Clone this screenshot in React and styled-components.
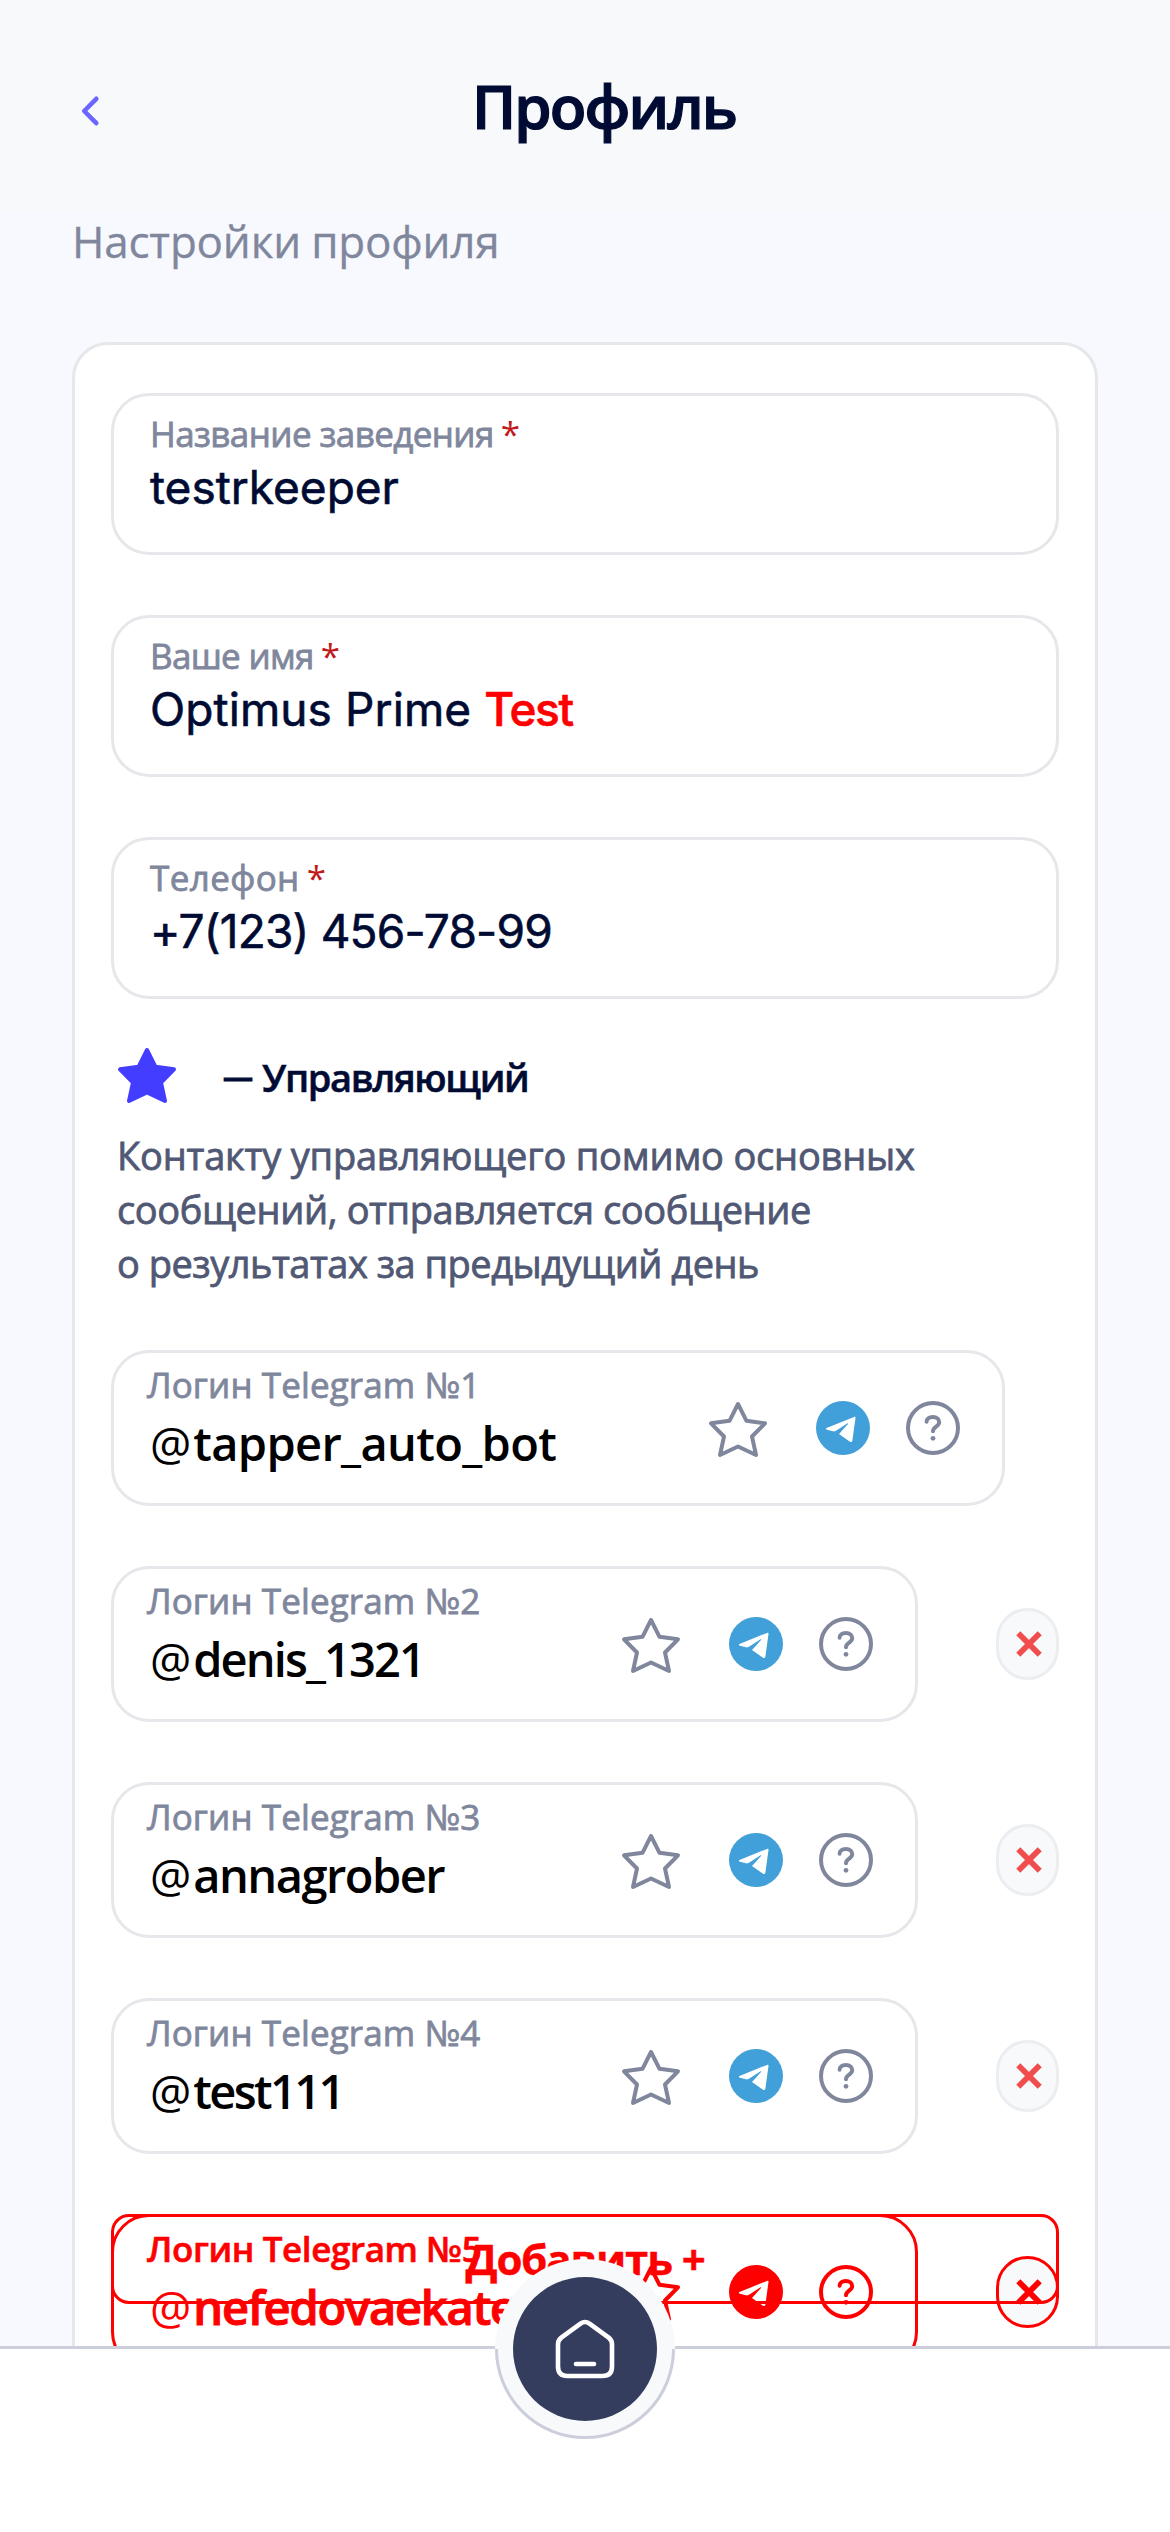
import React from 'react';
import styled, { createGlobalStyle } from 'styled-components';

const RED = '#ff0000';

const GlobalStyle = createGlobalStyle`
  *, *::before, *::after { box-sizing: border-box; }
  body {
    margin: 0;
    background: #f8f9fe;
    font-family: "Open Sans", "Noto Sans", sans-serif;
    color: #000b33;
  }
  svg { display: block; flex: none; overflow: visible; }
`;

const Page = styled.div`
  display: flex;
  flex-direction: column;
  width: 1170px;
  height: 2532px;
  overflow: hidden;
  background: #f8f9fe;
`;

const Header = styled.header`
  display: flex;
  align-items: center;
  flex: none;
  height: 211px;
  padding: 0 72px;
  background: #f7f9fa;
`;

const BackButton = styled.button`
  display: flex;
  width: 38px;
  padding: 10px 0 0 9px;
  border: 0;
  background: none;
`;

const Title = styled.h1`
  flex: 1;
  margin: 0;
  text-align: center;
  font-size: 60px;
  line-height: 80px;
  font-weight: 600;
  letter-spacing: -1.9px;
  -webkit-text-stroke: 1.2px currentColor;
`;

const Content = styled.main`
  flex: 1;
  min-height: 0;
  overflow: hidden;
  padding: 0 72px;
`;

const Subtitle = styled.p`
  margin: 0 0 71px;
  font-size: 44px;
  line-height: 60px;
  letter-spacing: -0.2px;
  word-spacing: -1px;
  -webkit-text-stroke: 0.3px currentColor;
  color: #80879d;
`;

const Card = styled.section`
  display: flex;
  flex-direction: column;
  min-height: 2300px;
  padding: 48px 36px;
  border: 3px solid #e5e7ea;
  border-radius: 36px;
  background: #fff;
`;

const Fields = styled.div`
  display: flex;
  flex-direction: column;
  gap: 60px;
`;

const Field = styled.label`
  display: block;
  height: 162px;
  padding: 15px 36px 0;
  border: 3px solid #e5e7ea;
  border-radius: 38px;
`;

const FieldLabel = styled.div`
  font-size: 35px;
  line-height: 45px;
  letter-spacing: ${(p) => p.$spacing}px;
  -webkit-text-stroke: 0.8px currentColor;
  color: #80879d;
`;

const Required = styled.span`
  margin-left: 7px;
  -webkit-text-stroke: 0;
  color: #c01a1a;
`;

const FieldValue = styled.div`
  font-family: Inter, Roboto, sans-serif;
  font-size: 46px;
  line-height: 62px;
  letter-spacing: ${(p) => p.$spacing}px;
  -webkit-text-stroke: 0.6px currentColor;
  white-space: pre;
`;

const Flagged = styled.span`
  color: ${RED};
  font-weight: 500;
  letter-spacing: -1.3px;
`;

const Legend = styled.div`
  display: flex;
  gap: 45px;
  height: 60px;
  margin: 45px 0 24px 5px;

  svg { margin-top: 2px; }
`;

const LegendText = styled.div`
  font-size: 38px;
  line-height: 66px;
  font-weight: 600;
  letter-spacing: -1.4px;
  word-spacing: 2px;
  -webkit-text-stroke: 0.5px currentColor;
`;

const Dash = styled.span`
  font-size: 30px;
  line-height: 0;
  vertical-align: 4px;
  -webkit-text-stroke: 1.2px currentColor;
`;

const Description = styled.p`
  margin: 0 0 60px 6px;
  font-size: 38px;
  line-height: 54px;
  -webkit-text-stroke: 0.8px currentColor;
  color: #505874;
`;

const Line = styled.span`
  display: block;
  letter-spacing: ${(p) => p.$spacing}px;
`;

const Row = styled.div`
  display: flex;
  align-items: center;
  gap: 78px;
`;

const LoginBox = styled.div`
  display: flex;
  align-items: center;
  width: ${(p) => (p.$wide ? 894 : 807)}px;
  height: 156px;
  padding: 0 42px 0 33px;
  border: 3px solid ${(p) => (p.$alert ? RED : '#e5e7ea')};
  border-radius: 38px;
  color: ${(p) => (p.$alert ? RED : '#000')};
`;

const LoginText = styled.div`
  flex: 1;
  min-width: 0;
  align-self: flex-start;
  padding-top: 11px;
`;

const LoginLabel = styled.div`
  font-size: 35px;
  line-height: 42px;
  font-weight: ${(p) => (p.$alert ? 600 : 400)};
  letter-spacing: ${(p) => (p.$alert ? -0.4 : 0.1)}px;
  -webkit-text-stroke: ${(p) => (p.$alert ? 0.6 : 0.8)}px currentColor;
  color: ${(p) => (p.$alert ? RED : '#80879d')};
`;

const LoginValue = styled.div`
  display: flex;
  align-items: baseline;
  gap: 2px;
  padding: 4px 0 0 3px;
  font-size: 47px;
  line-height: 66px;
  font-weight: 600;
  letter-spacing: ${(p) => p.$spacing}px;
  -webkit-text-stroke: ${(p) => (p.$alert ? 1 : 0)}px currentColor;
`;

const At = styled.span`
  font-size: 46px;
  font-weight: 400;
  letter-spacing: 0;
  -webkit-text-stroke: 0;
`;

const Icons = styled.div`
  display: flex;
  align-items: center;
  gap: 36px;
  color: ${(p) => (p.$alert ? RED : '#80879d')};

  svg:first-child { margin-right: 11px; }
`;

const RemoveButton = styled.button`
  display: flex;
  align-items: center;
  justify-content: center;
  width: 63px;
  height: 72px;
  padding: 0 0 0 3px;
  border: 3px solid ${(p) => (p.$alert ? RED : '#ecedf1')};
  border-radius: 32px;
  background: #f7f9fa;
  color: ${(p) => (p.$alert ? RED : '#f04e4e')};
`;

const AddButton = styled.button`
  position: relative;
  height: 90px;
  margin-top: -156px;
  padding: 0;
  border: 3px solid ${RED};
  border-radius: 18px;
  background: none;
  font-family: inherit;
  font-size: 42px;
  line-height: 84px;
  font-weight: 700;
  letter-spacing: -1.1px;
  -webkit-text-stroke: 0.4px currentColor;
  color: ${RED};
`;

const NavBar = styled.nav`
  position: relative;
  flex: none;
  display: flex;
  justify-content: center;
  height: 186px;
  border-top: 3px solid #cccedb;
  background: #fff;
`;

const HomeRing = styled.div`
  position: absolute;
  top: -90px;
  display: flex;
  align-items: center;
  justify-content: center;
  width: 180px;
  height: 180px;
  border-radius: 50%;
  background: #f7f9fb;

  &::after {
    content: '';
    position: absolute;
    inset: 0;
    border: 3px solid #cccedb;
    border-radius: 50%;
    clip-path: inset(50% 0 0 0);
  }
`;

const HomeButton = styled.button`
  display: flex;
  align-items: center;
  justify-content: center;
  width: 144px;
  height: 144px;
  padding: 0;
  border: 0;
  border-radius: 50%;
  background: #343d5e;
`;

const STAR = 'M31 4 L39.5 20.8 L58 23.3 L45 36.5 L49 55 L31 46.5 L13 55 L17 36.5 L4 23.3 L22.5 20.8 Z';

const Star = ({ fill = 'none', color = 'currentColor' }) => (
  <svg width="62" height="56" viewBox="0 0 62 56">
    <path d={STAR} fill={fill} stroke={color} strokeWidth="4" strokeLinejoin="round" />
  </svg>
);

const Telegram = ({ color = '#419fd9' }) => (
  <svg width="54" height="54" viewBox="0 0 54 54">
    <circle cx="27" cy="27" r="27" fill={color} />
    <path
      fill="#fff"
      d="M10.5 27 L38 15.9 C39.3 15.5 39.7 16.2 39.5 17 L36.4 39.5 C36.1 41.1 34.8 41.4 33.6 40.6 L23 33 L32 22.9 C32.4 22.2 31.8 22 31.2 22.4 L20 29.8 C19 30.4 18 30.5 17 30.3 L12 29 C9.4 28.4 9.4 27.5 10.5 27 Z"
    />
  </svg>
);

const Help = () => (
  <svg width="54" height="54" viewBox="0 0 54 54" fill="none" stroke="currentColor" strokeWidth="4">
    <circle cx="27" cy="27" r="25" />
    <path d="M20.6 20.8 C20.6 17.9 23 16 26.8 16 C30.8 16 33.2 18.2 33.2 21.3 C33.2 25.6 27 25.8 27 30.2" strokeLinecap="round" />
    <circle cx="27" cy="37.3" r="2.4" fill="currentColor" stroke="none" />
  </svg>
);

const Cross = () => (
  <svg width="26" height="26" viewBox="0 0 26 26">
    <path d="M2.3 2.3 L23.7 23.7 M23.7 2.3 L2.3 23.7" stroke="currentColor" strokeWidth="5.8" />
  </svg>
);

const HomeIcon = () => (
  <svg width="60" height="60" viewBox="0 0 60 60" fill="none" stroke="#fff" strokeWidth="4.6" strokeLinecap="round">
    <path d="M25.5 4.6 L6.3 18.6 Q3 21.2 3 25.5 V47.5 Q3 57 12.5 57 H47.5 Q57 57 57 47.5 V25.5 Q57 21.2 53.7 18.6 L34.5 4.6 Q30 1.4 25.5 4.6 Z" />
    <path d="M21 45 H39" />
  </svg>
);

const FIELDS = [
  { label: 'Название заведения', labelSpacing: -0.6, value: 'testrkeeper', spacing: 0 },
  { label: 'Ваше имя', labelSpacing: -0.7, value: 'Optimus Prime ', spacing: 0.1, flagged: 'Test' },
  { label: 'Телефон', labelSpacing: 0.4, value: '+7(123) 456-78-99', spacing: -0.8 },
];

const LOGINS = [
  { name: 'tapper_auto_bot', spacing: -0.65 },
  { name: 'denis_1321', spacing: -1.9 },
  { name: 'annagrober', spacing: -1.5 },
  { name: 'test111', spacing: -2.6 },
  { name: 'nefedovaekate', spacing: -1.2, alert: true },
];

export default function App() {
  return (
    <Page>
      <GlobalStyle />
      <Header>
        <BackButton aria-label="Назад">
          <svg width="18" height="30" viewBox="0 0 18 30" fill="none">
            <path d="M15.3 2.8 L3.2 15 L15.3 27.2" stroke="#6b66ff" strokeWidth="4.6" strokeLinecap="round" strokeLinejoin="round" />
          </svg>
        </BackButton>
        <Title>Профиль</Title>
      </Header>
      <Content>
        <Subtitle>Настройки профиля</Subtitle>
        <Card>
          <Fields>
            {FIELDS.map((f) => (
              <Field key={f.label}>
                <FieldLabel $spacing={f.labelSpacing}>
                  {f.label}
                  <Required>*</Required>
                </FieldLabel>
                <FieldValue $spacing={f.spacing}>
                  {f.value}
                  {f.flagged && <Flagged>{f.flagged}</Flagged>}
                </FieldValue>
              </Field>
            ))}
          </Fields>
          <Legend>
            <Star fill="#423dff" color="#423dff" />
            <LegendText><Dash>—</Dash> Управляющий</LegendText>
          </Legend>
          <Description>
            <Line $spacing={-0.2}>Контакту управляющего помимо основных</Line>
            <Line $spacing={-0.4}>сообщений, отправляется сообщение</Line>
            <Line $spacing={-0.5}>о результатах за предыдущий день</Line>
          </Description>
          <Fields>
            {LOGINS.map(({ name, spacing, alert }, i) => (
              <Row key={name}>
                <LoginBox $wide={i === 0} $alert={alert}>
                  <LoginText>
                    <LoginLabel $alert={alert}>Логин Telegram №{i + 1}</LoginLabel>
                    <LoginValue $alert={alert} $spacing={spacing}>
                      <At>@</At>
                      {name}
                    </LoginValue>
                  </LoginText>
                  <Icons $alert={alert}>
                    <Star />
                    <Telegram color={alert ? RED : undefined} />
                    <Help />
                  </Icons>
                </LoginBox>
                {i > 0 && (
                  <RemoveButton $alert={alert} aria-label="Удалить">
                    <Cross />
                  </RemoveButton>
                )}
              </Row>
            ))}
          </Fields>
          <AddButton>Добавить +</AddButton>
        </Card>
      </Content>
      <NavBar>
        <HomeRing>
          <HomeButton aria-label="Главная">
            <HomeIcon />
          </HomeButton>
        </HomeRing>
      </NavBar>
    </Page>
  );
}
